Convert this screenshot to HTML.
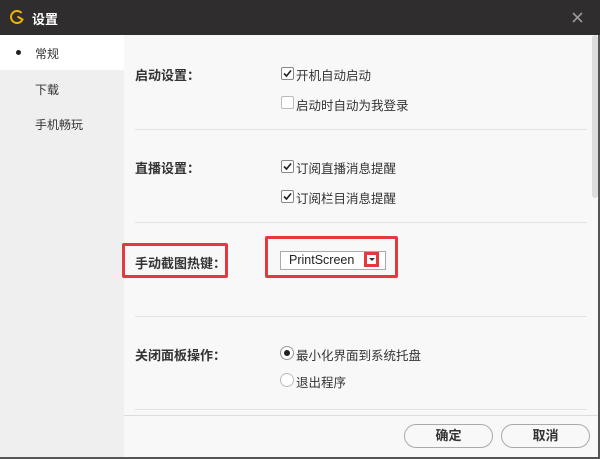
<!DOCTYPE html>
<html><head><meta charset="utf-8"><style>
*{margin:0;padding:0;box-sizing:border-box}
body{width:600px;height:459px;overflow:hidden;background:#f8f8f8;font-family:"Liberation Sans","Noto Sans CJK SC",sans-serif;font-size:12.5px;color:#333;position:relative}
.a{position:absolute}
.title{left:0;top:0;width:600px;height:35px;background:#2f2d2e}
.side{left:0;top:35px;width:124px;height:424px;background:#efefef}
.sel{left:0;top:35px;width:124px;height:35px;background:#fff}
.lab{font-weight:bold;color:#333;font-size:13px}
.sep{height:1px;background:#e3e3e3;left:135px;width:452px}
.cb{width:13px;height:13px;border:1px solid #888;background:#fff;border-radius:2px}
.rd{width:14px;height:14px;border:1px solid #999;background:#fff;border-radius:50%}
.btn{height:24px;border:1px solid #aaa;border-radius:12px;background:#f8f8f8;text-align:center;line-height:22px;font-weight:bold;font-size:13px}
</style></head><body>
<div class="a title"></div>
<svg class="a" style="left:8px;top:8px" width="18" height="18" viewBox="0 0 18 18"><path d="M13.5 5A6 6 0 1 0 14.5 11.5L9.5 8.5" fill="none" stroke="#f0b400" stroke-width="2"/></svg>
<div class="a" style="left:32px;top:9px;color:#fff;font-weight:bold;font-size:13px">设置</div>
<svg class="a" style="left:572px;top:12px" width="11" height="11" viewBox="0 0 11 11"><path d="M1 1L10 10M10 1L1 10" stroke="#999" stroke-width="1.6"/></svg>
<div class="a side"></div><div class="a sel"></div>
<div class="a" style="left:16px;top:50px;width:5px;height:5px;border-radius:50%;background:#222"></div>
<div class="a" style="left:35px;top:45px;font-size:12px">常规</div>
<div class="a" style="left:35px;top:81px;font-size:12px">下载</div>
<div class="a" style="left:35px;top:116px;font-size:12px">手机畅玩</div>
<div class="a" style="left:592px;top:35px;width:6px;height:163px;background:#ddd;border-radius:3px"></div>
<div class="a" style="left:598px;top:35px;width:2px;height:424px;background:#555"></div>
<div class="a" style="left:0;top:457px;width:600px;height:2px;background:#555"></div>

<div class="a lab" style="left:135px;top:65px">启动设置：</div>
<div class="a cb" style="left:281px;top:67px"></div><svg class="a" style="left:281px;top:67px" width="13" height="13"><path d="M3 6.5L5.5 9L10 3.5" fill="none" stroke="#222" stroke-width="1.6"/></svg>
<div class="a" style="left:296px;top:65px">开机自动启动</div>
<div class="a cb" style="left:281px;top:96px;border-color:#bbb"></div>
<div class="a" style="left:296px;top:95px">启动时自动为我登录</div>
<div class="a sep" style="top:129px"></div>

<div class="a lab" style="left:135px;top:158px">直播设置：</div>
<div class="a cb" style="left:281px;top:160px"></div><svg class="a" style="left:281px;top:160px" width="13" height="13"><path d="M3 6.5L5.5 9L10 3.5" fill="none" stroke="#222" stroke-width="1.6"/></svg>
<div class="a" style="left:296px;top:158px">订阅直播消息提醒</div>
<div class="a cb" style="left:281px;top:190px"></div><svg class="a" style="left:281px;top:190px" width="13" height="13"><path d="M3 6.5L5.5 9L10 3.5" fill="none" stroke="#222" stroke-width="1.6"/></svg>
<div class="a" style="left:296px;top:188px">订阅栏目消息提醒</div>
<div class="a sep" style="top:222px"></div>

<div class="a" style="left:122px;top:243px;width:106px;height:35px;border:3px solid #e5393f;border-radius:2px"></div>
<div class="a lab" style="left:135px;top:253px">手动截图热键：</div>
<div class="a" style="left:265px;top:236px;width:133px;height:42px;border:3px solid #e5393f;border-radius:2px"></div>
<div class="a" style="left:280px;top:251px;width:106px;height:19px;border:1px solid #aaa;background:#fff"></div>
<div class="a" style="left:289px;top:253px;font-size:12.5px;color:#222">PrintScreen</div>
<div class="a" style="left:364px;top:252px;width:15px;height:15px;border:3px solid #e5393f"></div>
<div class="a" style="left:369px;top:258px;width:0;height:0;border-left:3px solid transparent;border-right:3px solid transparent;border-top:3px solid #333"></div>
<div class="a sep" style="top:316px"></div>

<div class="a lab" style="left:135px;top:345px">关闭面板操作：</div>
<div class="a rd" style="left:280px;top:346px"></div><div class="a" style="left:284px;top:350px;width:6px;height:6px;border-radius:50%;background:#222"></div>
<div class="a" style="left:296px;top:345px">最小化界面到系统托盘</div>
<div class="a rd" style="left:280px;top:373px;border-color:#bbb"></div>
<div class="a" style="left:296px;top:372px">退出程序</div>
<div class="a sep" style="top:409px"></div>

<div class="a" style="left:124px;top:415px;width:474px;height:42px;background:#f8f8f8;border-top:1px solid #ddd"></div>
<div class="a btn" style="left:404px;top:424px;width:89px">确定</div>
<div class="a btn" style="left:501px;top:424px;width:89px">取消</div>
</body></html>
